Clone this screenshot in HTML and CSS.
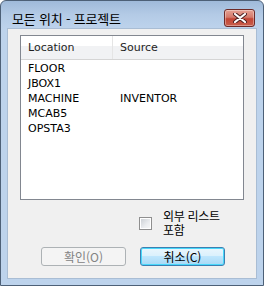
FILE: index.html
```html
<!DOCTYPE html>
<html lang="ko">

<head>
    <meta charset="UTF-8">
    <title>모든 위치 - 프로젝트</title>
    <link rel="stylesheet" href="styles.css">
</head>

<body>
    <div class="window">
        <div class="titlebar">
            <span class="title">모든 위치 - 프로젝트</span>
            <button class="close-btn" aria-label="close">
                <svg width="14" height="10" viewBox="0 0 14 10">
                    <path d="M2 1 L12 9 M12 1 L2 9" stroke="#4a2020" stroke-width="4" stroke-linecap="round"/>
                    <path d="M2 1 L12 9 M12 1 L2 9" stroke="#fff" stroke-width="2.2" stroke-linecap="round"/>
                </svg>
            </button>
        </div>
        <div class="client">
            <div class="list">
                <div class="list-header">
                    <div class="col col-loc">Location</div>
                    <div class="col col-src">Source</div>
                </div>
                <div class="list-body">
                    <div class="row"><span class="cell-loc">FLOOR</span><span class="cell-src"></span></div>
                    <div class="row"><span class="cell-loc">JBOX1</span><span class="cell-src"></span></div>
                    <div class="row"><span class="cell-loc">MACHINE</span><span class="cell-src">INVENTOR</span></div>
                    <div class="row"><span class="cell-loc">MCAB5</span><span class="cell-src"></span></div>
                    <div class="row"><span class="cell-loc">OPSTA3</span><span class="cell-src"></span></div>
                </div>
            </div>
            <div class="option">
                <span class="checkbox"></span>
                <span class="option-label">외부 리스트 포함</span>
            </div>
            <div class="buttons">
                <button class="btn" disabled>확인(O)</button>
                <button class="btn btn-default">취소(C)</button>
            </div>
        </div>
    </div>
</body>

</html>
```

FILE: styles.css
```css
body {
    margin: 0;
    padding: 0;
    background: #fff;
    font-family: "Noto Sans CJK KR", "DejaVu Sans", sans-serif;
}

.window {
    width: 262px;
    height: 284px;
    border: 1px solid #4d6077;
    border-radius: 6px 6px 0 0;
    background: linear-gradient(#9fbada 0px, #b4cbe6 14px, #bdd3ec 28px, #bdd3ec 100%);
    display: flex;
    flex-direction: column;
}

.titlebar {
    height: 27px;
    display: flex;
    align-items: flex-start;
    padding-left: 11px;
}

.title {
    font-size: 13px;
    line-height: 15px;
    margin-top: 10px;
    letter-spacing: -0.2px;
    color: #000;
}

.close-btn {
    margin-left: auto;
    margin-right: 8px;
    margin-top: 8px;
    width: 31px;
    height: 18px;
    padding: 0;
    border: 1px solid #6e2a28;
    border-radius: 3px;
    background: linear-gradient(#e6a193 0%, #d47a6c 45%, #c24535 55%, #c9604d 100%);
    box-shadow: inset 0 0 0 1px rgba(255, 255, 255, 0.35);
    display: flex;
    align-items: center;
    justify-content: center;
}

.client {
    margin: 0 6px 6px 6px;
    flex: 1;
    background: #f0f0f0;
    border: 1px solid #a9bdd4;
    padding: 6px 12px 0 12px;
    display: flex;
    flex-direction: column;
}

.list {
    height: 163px;
    border: 1px solid #828790;
    background: #fff;
    font-family: "DejaVu Sans", sans-serif;
    font-size: 11px;
}

.list-header {
    display: flex;
    height: 23px;
    border-bottom: 1px solid #d5d5d5;
    background: linear-gradient(#fff 0%, #fff 42%, #f1f2f4 42%, #f1f2f4 100%);
}

.col {
    line-height: 23px;
    padding-left: 7px;
    color: #1e1e1e;
}

.col-loc {
    width: 84px;
    border-right: 1px solid #e5e5e5;
}

.list-body {
    padding-top: 1px;
}

.row {
    display: flex;
    height: 15px;
    line-height: 15px;
    color: #000;
}

.cell-loc {
    width: 85px;
    padding-left: 7px;
}

.cell-src {
    padding-left: 7px;
}

.option {
    display: flex;
    align-items: center;
    gap: 11px;
    padding-left: 119px;
    margin-top: 8px;
    height: 30px;
}

.checkbox {
    width: 11px;
    height: 11px;
    border: 1px solid #8f8f8f;
    background: linear-gradient(135deg, #c8ccd2 0%, #eceef0 60%, #f8f8f8 100%);
    box-shadow: inset 0 0 0 1px #fff;
}

.option-label {
    width: 64px;
    font-size: 12px;
    line-height: 14px;
    letter-spacing: -0.3px;
}

.buttons {
    display: flex;
    gap: 14px;
    padding-left: 21px;
    margin-top: 9px;
}

.btn {
    width: 85px;
    height: 19px;
    padding: 0;
    font-family: "Noto Sans CJK KR", "DejaVu Sans", sans-serif;
    font-size: 12px;
    line-height: 16px;
    border: 1px solid #707070;
    border-radius: 3px;
    background: linear-gradient(#f2f2f2 0%, #ebebeb 50%, #dddddd 50%, #cfcfcf 100%);
    color: #000;
}

.btn:disabled {
    border-color: #adb2b5;
    background: #f4f4f4;
    color: #838383;
}

.btn-default {
    border-color: #3c7fb1;
    background: linear-gradient(#eaf6fd 0%, #d9f0fc 50%, #bee6fd 50%, #a7d9f5 100%);
    box-shadow: inset 0 0 0 1px #48d8fb;
}
```
